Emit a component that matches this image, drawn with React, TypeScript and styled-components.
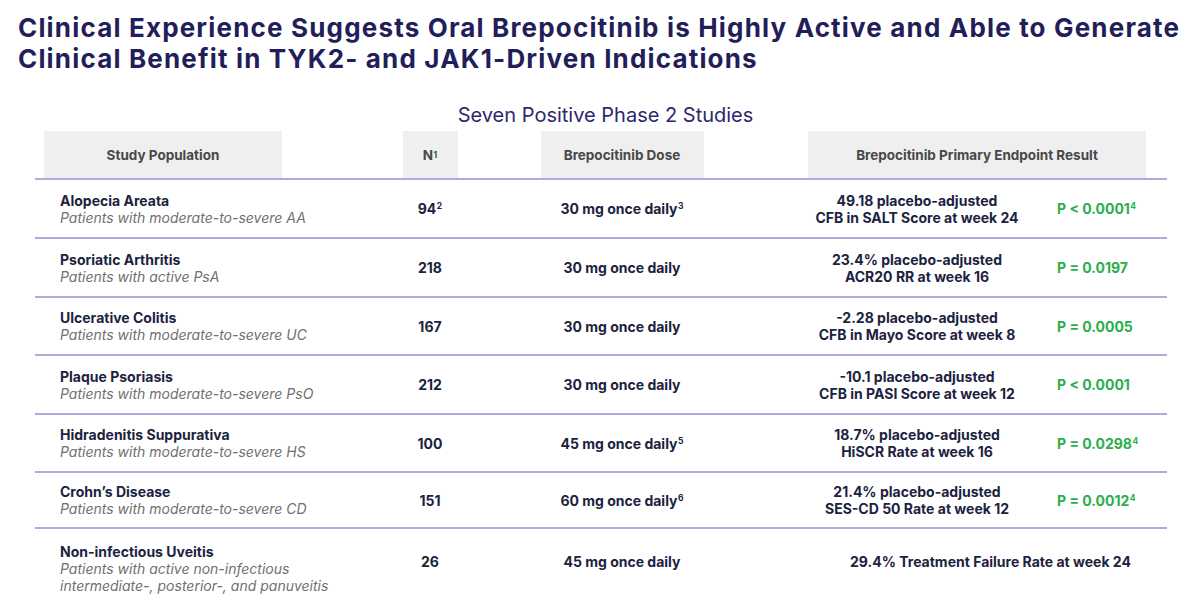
import React from "react";
import styled, { createGlobalStyle } from "styled-components";

const GlobalStyle = createGlobalStyle`
  html, body {
    margin: 0;
    padding: 0;
    background: #ffffff;
  }
  body {
    font-family: "Inter", "Liberation Sans", sans-serif;
  }
`;

const Page = styled.div`
  width: 1189px;
  height: 607px;
  overflow: hidden;
  background: #ffffff;
`;

const Title = styled.h1`
  margin: 0;
  padding: 12px 0 0 18px;
  font-family: "Inter", sans-serif;
  font-weight: 700;
  font-size: 26px;
  line-height: 31px;
  letter-spacing: 1.17px;
  color: #221e5a;
  white-space: nowrap;
`;

const Subtitle = styled.h2`
  margin: 29px 0 0 0;
  text-align: center;
  padding-left: 22px;
  font-family: "Inter", sans-serif;
  font-weight: 400;
  font-size: 20px;
  line-height: 24px;
  color: #2c296c;
`;

const Table = styled.div`
  margin: 4px 0 0 35px;
  width: 1132px;
`;

const Row = styled.div<{ $height: number; $last?: boolean }>`
  display: grid;
  grid-template-columns: 335px 120px 264px 1fr;
  align-items: center;
  height: ${(p) => p.$height}px;
  border-bottom: ${(p) => (p.$last ? "none" : "2px solid #aeabe2")};
`;

const HeaderRow = styled(Row)`
  align-items: end;
`;

const HeaderCell = styled.div<{ $width: number; $offset?: number }>`
  width: ${(p) => p.$width}px;
  height: 47px;
  margin-left: ${(p) => (p.$offset === undefined ? "auto" : `${p.$offset}px`)};
  margin-right: ${(p) => (p.$offset === undefined ? "auto" : "0")};
  background: #efefef;
  display: flex;
  align-items: center;
  justify-content: center;
  font-weight: 700;
  font-size: 13.5px;
  color: #484848;
`;

const NameCell = styled.div<{ $top?: boolean }>`
  padding-left: 25px;
  align-self: ${(p) => (p.$top ? "start" : "center")};
  padding-top: ${(p) => (p.$top ? "14px" : "0")};
  line-height: 17px;
`;

const Name = styled.div`
  font-weight: 700;
  font-size: 14px;
  color: #1b2340;
`;

const Desc = styled.div`
  font-style: italic;
  font-size: 14px;
  color: #707070;
`;

const Center = styled.div`
  text-align: center;
  font-weight: 700;
  font-size: 14px;
  color: #1b2340;
`;

const ResultCell = styled.div`
  display: grid;
  grid-template-columns: 274px 1fr;
  column-gap: 3px;
  align-items: center;
  padding-left: 26px;
`;

const ResultText = styled.div`
  text-align: center;
  font-weight: 700;
  font-size: 14px;
  line-height: 17px;
  color: #1b2340;
`;

const PValue = styled.div`
  font-weight: 700;
  font-size: 14px;
  color: #2aae4b;
`;

const WideResult = styled.div`
  padding-left: 60px;
  text-align: center;
  font-weight: 700;
  font-size: 14px;
  color: #1b2340;
`;

const Sup = styled.sup`
  font-size: 8.5px;
  font-weight: 700;
  line-height: 0;
  vertical-align: 5px;
  margin-left: 0.5px;
`;

type Study = {
  name: string;
  desc: string[];
  n: string;
  nSup?: string;
  dose: string;
  doseSup?: string;
  result: string[];
  p?: string;
  pSup?: string;
  height: number;
};

const studies: Study[] = [
  {
    name: "Alopecia Areata",
    desc: ["Patients with moderate-to-severe AA"],
    n: "94",
    nSup: "2",
    dose: "30 mg once daily",
    doseSup: "3",
    result: ["49.18 placebo-adjusted", "CFB in SALT Score at week 24"],
    p: "P < 0.0001",
    pSup: "4",
    height: 57,
  },
  {
    name: "Psoriatic Arthritis",
    desc: ["Patients with active PsA"],
    n: "218",
    dose: "30 mg once daily",
    result: ["23.4% placebo-adjusted", "ACR20 RR at week 16"],
    p: "P = 0.0197",
    height: 57,
  },
  {
    name: "Ulcerative Colitis",
    desc: ["Patients with moderate-to-severe UC"],
    n: "167",
    dose: "30 mg once daily",
    result: ["-2.28 placebo-adjusted", "CFB in Mayo Score at week 8"],
    p: "P = 0.0005",
    height: 56,
  },
  {
    name: "Plaque Psoriasis",
    desc: ["Patients with moderate-to-severe PsO"],
    n: "212",
    dose: "30 mg once daily",
    result: ["-10.1 placebo-adjusted", "CFB in PASI Score at week 12"],
    p: "P < 0.0001",
    height: 57,
  },
  {
    name: "Hidradenitis Suppurativa",
    desc: ["Patients with moderate-to-severe HS"],
    n: "100",
    dose: "45 mg once daily",
    doseSup: "5",
    result: ["18.7% placebo-adjusted", "HiSCR Rate at week 16"],
    p: "P = 0.0298",
    pSup: "4",
    height: 56,
  },
  {
    name: "Crohn’s Disease",
    desc: ["Patients with moderate-to-severe CD"],
    n: "151",
    dose: "60 mg once daily",
    doseSup: "6",
    result: ["21.4% placebo-adjusted", "SES-CD 50 Rate at week 12"],
    p: "P = 0.0012",
    pSup: "4",
    height: 54,
  },
];

const App = () => {
  return (
    <>
      <GlobalStyle />
      <Page>
        <Title>
          Clinical Experience Suggests Oral Brepocitinib is Highly Active and Able to Generate
          <br />
          Clinical Benefit in TYK2- and JAK1-Driven Indications
        </Title>

        <Subtitle>Seven Positive Phase 2 Studies</Subtitle>

        <Table>
          <HeaderRow $height={47}>
            <HeaderCell $width={238} $offset={9}>
              Study Population
            </HeaderCell>
            <HeaderCell $width={55}>
              N<Sup>1</Sup>
            </HeaderCell>
            <HeaderCell $width={163}>Brepocitinib Dose</HeaderCell>
            <HeaderCell $width={338} $offset={54}>
              Brepocitinib Primary Endpoint Result
            </HeaderCell>
          </HeaderRow>

          {studies.map((s) => (
            <Row key={s.name} $height={s.height}>
              <NameCell>
                <Name>{s.name}</Name>
                {s.desc.map((d) => (
                  <Desc key={d}>{d}</Desc>
                ))}
              </NameCell>
              <Center>
                {s.n}
                {s.nSup && <Sup>{s.nSup}</Sup>}
              </Center>
              <Center>
                {s.dose}
                {s.doseSup && <Sup>{s.doseSup}</Sup>}
              </Center>
              <ResultCell>
                <ResultText>
                  {s.result.map((r) => (
                    <div key={r}>{r}</div>
                  ))}
                </ResultText>
                <PValue>
                  {s.p}
                  {s.pSup && <Sup>{s.pSup}</Sup>}
                </PValue>
              </ResultCell>
            </Row>
          ))}

          <Row $height={58} $last>
            <NameCell $top>
              <Name>Non-infectious Uveitis</Name>
              <Desc>Patients with active non-infectious</Desc>
              <Desc>intermediate-, posterior-, and panuveitis</Desc>
            </NameCell>
            <Center>26</Center>
            <Center>45 mg once daily</Center>
            <WideResult>29.4% Treatment Failure Rate at week 24</WideResult>
          </Row>
        </Table>
      </Page>
    </>
  );
};

export default App;
